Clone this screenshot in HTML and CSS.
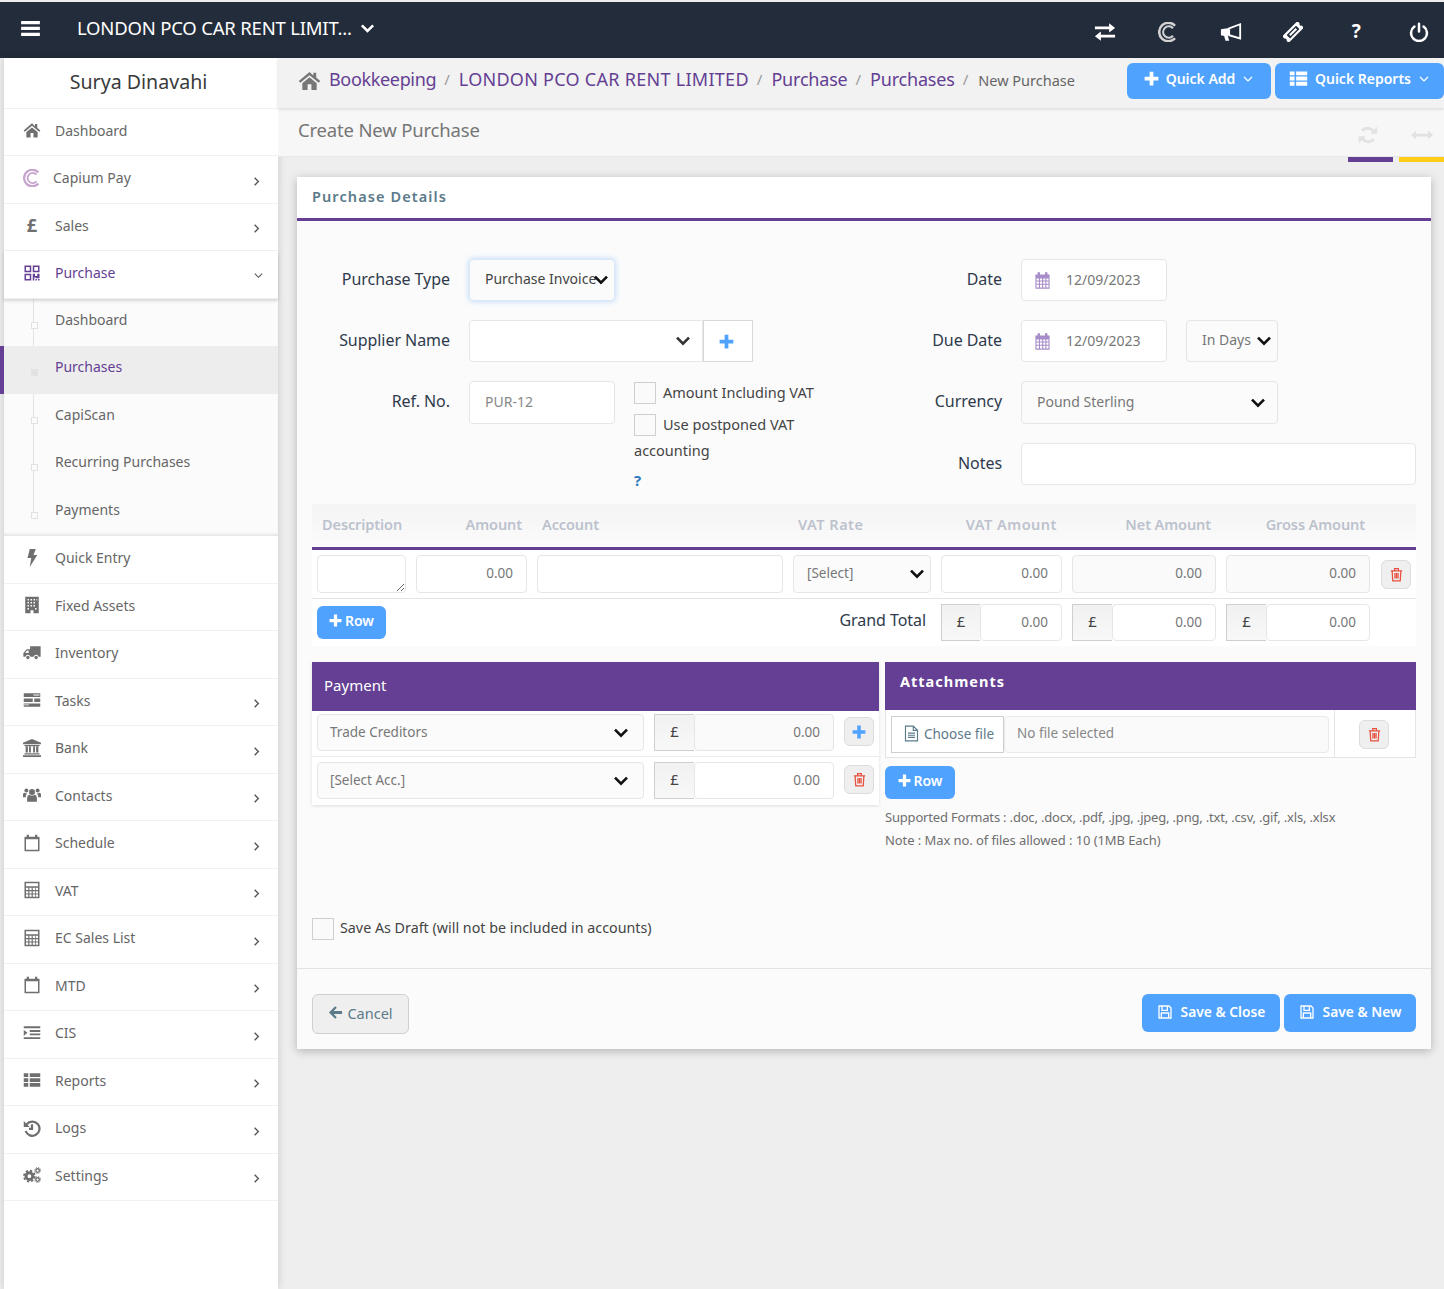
FILE: index.html
```html
<!DOCTYPE html>
<html lang="en">
<head>
<meta charset="utf-8">
<title>Create New Purchase</title>
<link rel="stylesheet" href="styles.css">
</head>
<body>
<svg class="sprite" xmlns="http://www.w3.org/2000/svg">
  <symbol id="i-home" viewBox="0 0 24 24"><path d="M12 3 .8 12.5l1.600 1.900L12 6.400l9.600 8 1.600-1.900-4.200-3.600V4h-3v2.900z"/><path d="M4.500 14.800V22H10v-6h4v6h5.500v-7.200L12 8.600z"/></symbol>
  <symbol id="i-exchange" viewBox="0 0 24 24"><path d="M1 6h15.500V2.500L23 7.500l-6.500 5V9H1zM23 15H7.500v-3.500L1 16.500l6.500 5V18H23z"/></symbol>
  <symbol id="i-capium" viewBox="0 0 24 24"><g fill="none" stroke="currentColor"><path stroke-width="3" d="M20.500 4.500a11 11 0 1 0 0 15"/><path stroke-width="2.400" d="M18 7.500a6.800 6.800 0 1 0 0 9"/></g></symbol>
  <symbol id="i-bullhorn" viewBox="0 0 24 24"><path d="M1 9 10 7.500v8l-1.500.3 1.500 5.700H6l-1.500-5.200L1 15.500z"/><path fill="none" stroke="currentColor" stroke-width="2" d="M10 8 22 3.500v15.500l-12-3.500z"/></symbol>
  <symbol id="i-ticket" viewBox="0 0 24 24"><g transform="rotate(-45 12 12)"><path fill-rule="evenodd" d="M-1 6.500h26v3.700a2 2 0 0 0 0 3.800v3.500H-1V14a2 2 0 0 0 0-3.800zM4 9.200v5.800h16V9.200z"/><path d="M6.500 10.800h11v2.600h-11z"/></g></symbol>
  <symbol id="i-power" viewBox="0 0 24 24"><path fill="none" stroke="currentColor" stroke-width="3" stroke-linecap="round" d="M6.500 5.500a9.500 9.500 0 1 0 11 0M12 2v9.500"/></symbol>
  <symbol id="i-plus" viewBox="0 0 24 24"><path d="M9 1h6v8h8v6h-8v8H9v-8H1V9h8z"/></symbol>
  <symbol id="i-list" viewBox="0 0 24 24"><path d="M1 3h6v5H1zM9 3h14v5H9zM1 9.500h6v5H1zM9 9.500h14v5H9zM1 16h6v5H1zM9 16h14v5H9z"/></symbol>
  <symbol id="i-refresh" viewBox="0 0 24 24"><path fill="none" stroke="currentColor" stroke-width="3.400" d="M19.500 9.500A8.500 8.500 0 0 0 5 7M4.500 14.500A8.500 8.500 0 0 0 19 17"/><path d="M23 2v8.500h-8.500zM1 22v-8.500h8.500z"/></symbol>
  <symbol id="i-arrows" viewBox="0 0 24 24"><path d="M0 12l5.500-5v3.500h13V7l5.500 5-5.500 5v-3.500h-13V17z"/></symbol>
  <symbol id="i-chev" viewBox="0 0 24 24"><path fill="none" stroke="currentColor" stroke-width="4" d="M3 7l9 9 9-9"/></symbol>
  <symbol id="i-chev-thin" viewBox="0 0 24 24"><path fill="none" stroke="currentColor" stroke-width="2.400" d="M4 8l8 8 8-8"/></symbol>
  <symbol id="i-chev-r" viewBox="0 0 24 24"><path fill="none" stroke="currentColor" stroke-width="3" d="M8 4l8 8-8 8"/></symbol>
  <symbol id="i-qr" viewBox="0 0 24 24"><path fill-rule="evenodd" d="M2 2h9v9H2zM4 4v5h5V4zM13 2h9v9h-9zM15 4v5h5V4zM2 13h9v9H2zM4 15v5h5v-5zM13 13h3v3h3v-3h3v6h-5v-1h-2v4h-2zM20 20h2v2h-2zM16.500 20h2v2h-2z"/></symbol>
  <symbol id="i-bolt" viewBox="0 0 24 24"><path d="M9 0h8l-3 8h5L9 24l2-12H6z"/></symbol>
  <symbol id="i-building" viewBox="0 0 24 24"><path fill-rule="evenodd" d="M3 1h18v22h-7v-4h-4v4H3zM6 4v2h2V4zM10 4v2h2V4zM14 4v2h2V4zM18 4v2h1V4zM6 8v2h2V8zM10 8v2h2V8zM14 8v2h2V8zM6 12v2h2v-2zM10 12v2h2v-2zM14 12v2h2v-2zM6 16v2h2v-2zM16 16v2h2v-2z"/></symbol>
  <symbol id="i-truck" viewBox="0 0 24 24"><path fill-rule="evenodd" d="M23.500 3v14h-2.700a3.300 3.300 0 0 0-6.500 0h-4.600a3.300 3.300 0 0 0-6.500 0H.500v-5L5 7h4.500V3zM2.800 12h4.700V8.800H5.600z"/><circle cx="6.500" cy="18" r="2.200"/><circle cx="17.500" cy="18" r="2.200"/></symbol>
  <symbol id="i-tasks" viewBox="0 0 24 24"><path d="M1 3h22v5H1zM1 10h12v4.500H1zM15 10h8v4.500h-8zM1 16.500h22V21H1z"/><path fill="#fff" d="M14 4.500h8v1.500h-8zM1 18h7v1H1z"/></symbol>
  <symbol id="i-bank" viewBox="0 0 24 24"><path d="M12 0 0 5v2h24V5zM2 8h20v1.500H2zM3.500 10h3v8h-3zM8 10h2.500v8H8zM13.500 10H16v8h-2.500zM17.500 10h3v8h-3zM2 19h20v1.500H2zM0 21.500h24V24H0z"/></symbol>
  <symbol id="i-users" viewBox="0 0 24 24"><circle cx="12" cy="8" r="4"/><circle cx="4.500" cy="6" r="2.600"/><circle cx="19.500" cy="6" r="2.600"/><path d="M5.500 21v-5c0-3 2-4.500 3-4.500 2 1.500 5 1.500 7 0 1 0 3 1.500 3 4.500v5zM0 15v-3c0-2 1-3 2-3 1 1 3 1 4 .8-1.500 1-2.300 2.500-2.200 5.200zM24 15v-3c0-2-1-3-2-3-1 1-3 1-4 .8 1.500 1 2.300 2.500 2.200 5.200z"/></symbol>
  <symbol id="i-cal" viewBox="0 0 24 24"><path fill-rule="evenodd" d="M2 3.500h3V1h3v2.500h8V1h3v2.500h3V23H2zM4 7v14h16V7z"/></symbol>
  <symbol id="i-calgrid" viewBox="0 0 24 24"><path fill-rule="evenodd" d="M2 3.500h3V.5h3.500v3h7v-3H19v3h3V23.500H2zM3.500 9v3h3.500V9zM8.500 9v3h3V9zM13 9v3h3V9zM17.500 9v3H20.500V9zM3.500 13.500v3h3.500v-3zM8.500 13.500v3h3v-3zM13 13.500v3h3v-3zM17.500 13.500v3h3v-3zM3.500 18v4h3.500v-4zM8.500 18v4h3v-4zM13 18v4h3v-4zM17.500 18v4h3v-4z"/></symbol>
  <symbol id="i-grid" viewBox="0 0 24 24"><path fill-rule="evenodd" d="M2 1h20v22H2zM4 3v4h16V3zM4 9v3h3V9zM8.500 9v3h3V9zM13 9v3h3V9zM17 9v3h3V9zM4 13.500v3h3v-3zM8.500 13.500v3h3v-3zM13 13.500v3h3v-3zM17 13.500v3h3v-3zM4 18v3h3v-3zM8.500 18v3h3v-3zM13 18v3h3v-3zM17 18v3h3v-3z"/></symbol>
  <symbol id="i-indent" viewBox="0 0 24 24"><path d="M1 3h22v2.500H1zM9 8h14v2.500H9zM9 12.500h14V15H9zM1 17.500h22V20H1zM1 8l5 3.800-5 3.700z"/></symbol>
  <symbol id="i-history" viewBox="0 0 24 24"><path fill="none" stroke="currentColor" stroke-width="3" d="M5 7a9.500 9.500 0 1 1-1.500 9M12 7v6H8"/><path d="M1 2.500l8 8H1z"/></symbol>
  <symbol id="i-cogs" viewBox="0 0 24 24"><g fill="none" stroke="currentColor"><circle cx="8.500" cy="13.500" r="4.500" stroke-width="4"/><circle cx="8.500" cy="13.500" r="7.200" stroke-width="2.400" stroke-dasharray="3 2.650"/><circle cx="19.500" cy="6" r="2.400" stroke-width="1.800"/><circle cx="19.500" cy="6" r="4" stroke-width="1.200" stroke-dasharray="1.600 1.540"/><circle cx="19.500" cy="18" r="2.400" stroke-width="1.800"/><circle cx="19.500" cy="18" r="4" stroke-width="1.200" stroke-dasharray="1.600 1.540"/></g></symbol>
  <symbol id="i-trash" viewBox="0 0 24 24"><path fill="none" stroke="currentColor" stroke-width="2" d="M3 6h18M9 6V2.500h6V6M5 6l1 16h12l1-16M9.500 9.500v9M12 9.500v9M14.500 9.500v9"/></symbol>
  <symbol id="i-file" viewBox="0 0 24 24"><path fill="none" stroke="currentColor" stroke-width="1.600" d="M3.500 1.500h11l6 6v15h-17zM14.500 1.500v6h6M7 11.500h10M7 14.500h10M7 17.500h10"/></symbol>
  <symbol id="i-save" viewBox="0 0 24 24"><path fill="none" stroke="currentColor" stroke-width="2" d="M3 3h15l3 3v15H3zM7.500 3v6.500h8V3M6.500 21v-7.500h11V21"/></symbol>
  <symbol id="i-back" viewBox="0 0 24 24"><path d="M11.500 2 1.500 12l10 10 2.500-2.500-5-5h13.500v-5H9l5-5z"/></symbol>
</svg>

<header class="topbar">
  <div class="top-left">
    <svg class="top-bars" viewBox="0 0 20 16"><path d="M0 0h20v3.500H0zM0 6.200h20v3.500H0zM0 12.500h20V16H0z"/></svg>
    <span class="company">LONDON PCO CAR RENT LIMIT...</span>
    <svg class="ic-15"><use href="#i-chev"/></svg>
  </div>
  <nav class="top-icons">
    <svg class="ic-22"><use href="#i-exchange"/></svg>
    <svg class="ic-20 muted-ic"><use href="#i-capium"/></svg>
    <svg class="ic-22"><use href="#i-bullhorn"/></svg>
    <svg class="ic-20"><use href="#i-ticket"/></svg>
    <span class="top-q">?</span>
    <svg class="ic-20"><use href="#i-power"/></svg>
  </nav>
</header>

<div class="shell">
  <aside class="sidebar">
    <div class="profile">Surya Dinavahi</div>
    <ul class="nav">
      <li class="nav-item"><svg class="nav-ic"><use href="#i-home"/></svg><span>Dashboard</span></li>
      <li class="nav-item tight"><svg class="nav-ic capium"><use href="#i-capium"/></svg><span>Capium Pay</span><svg class="nav-arrow"><use href="#i-chev-r"/></svg></li>
      <li class="nav-item"><span class="nav-ic pound">£</span><span>Sales</span><svg class="nav-arrow"><use href="#i-chev-r"/></svg></li>
      <li class="nav-item open"><svg class="nav-ic qr"><use href="#i-qr"/></svg><span>Purchase</span><svg class="nav-arrow down"><use href="#i-chev-thin"/></svg></li>
      <li class="subnav">
        <ul>
          <li class="sub-item">Dashboard</li>
          <li class="sub-item active">Purchases</li>
          <li class="sub-item">CapiScan</li>
          <li class="sub-item">Recurring Purchases</li>
          <li class="sub-item">Payments</li>
        </ul>
      </li>
      <li class="nav-item"><svg class="nav-ic"><use href="#i-bolt"/></svg><span>Quick Entry</span></li>
      <li class="nav-item"><svg class="nav-ic"><use href="#i-building"/></svg><span>Fixed Assets</span></li>
      <li class="nav-item"><svg class="nav-ic"><use href="#i-truck"/></svg><span>Inventory</span></li>
      <li class="nav-item"><svg class="nav-ic"><use href="#i-tasks"/></svg><span>Tasks</span><svg class="nav-arrow"><use href="#i-chev-r"/></svg></li>
      <li class="nav-item"><svg class="nav-ic"><use href="#i-bank"/></svg><span>Bank</span><svg class="nav-arrow"><use href="#i-chev-r"/></svg></li>
      <li class="nav-item"><svg class="nav-ic"><use href="#i-users"/></svg><span>Contacts</span><svg class="nav-arrow"><use href="#i-chev-r"/></svg></li>
      <li class="nav-item"><svg class="nav-ic"><use href="#i-cal"/></svg><span>Schedule</span><svg class="nav-arrow"><use href="#i-chev-r"/></svg></li>
      <li class="nav-item"><svg class="nav-ic"><use href="#i-grid"/></svg><span>VAT</span><svg class="nav-arrow"><use href="#i-chev-r"/></svg></li>
      <li class="nav-item"><svg class="nav-ic"><use href="#i-grid"/></svg><span>EC Sales List</span><svg class="nav-arrow"><use href="#i-chev-r"/></svg></li>
      <li class="nav-item"><svg class="nav-ic"><use href="#i-cal"/></svg><span>MTD</span><svg class="nav-arrow"><use href="#i-chev-r"/></svg></li>
      <li class="nav-item"><svg class="nav-ic"><use href="#i-indent"/></svg><span>CIS</span><svg class="nav-arrow"><use href="#i-chev-r"/></svg></li>
      <li class="nav-item"><svg class="nav-ic"><use href="#i-list"/></svg><span>Reports</span><svg class="nav-arrow"><use href="#i-chev-r"/></svg></li>
      <li class="nav-item"><svg class="nav-ic"><use href="#i-history"/></svg><span>Logs</span><svg class="nav-arrow"><use href="#i-chev-r"/></svg></li>
      <li class="nav-item"><svg class="nav-ic"><use href="#i-cogs"/></svg><span>Settings</span><svg class="nav-arrow"><use href="#i-chev-r"/></svg></li>
    </ul>
  </aside>

  <main class="main">
    <div class="crumbbar">
      <div class="crumbs">
        <svg class="crumb-home"><use href="#i-home"/></svg>
        <a class="crumb book">Bookkeeping</a><span class="sep">/</span>
        <a class="crumb caps">LONDON PCO CAR RENT LIMITED</a><span class="sep">/</span>
        <a class="crumb">Purchase</a><span class="sep">/</span>
        <a class="crumb">Purchases</a><span class="sep">/</span>
        <span class="crumb-current">New Purchase</span>
      </div>
      <div class="quick">
        <button class="btn-quick add"><svg class="ic-15"><use href="#i-plus"/></svg>Quick Add<svg class="ic-12"><use href="#i-chev-thin"/></svg></button>
        <button class="btn-quick reports"><svg class="ic-19"><use href="#i-list"/></svg>Quick Reports<svg class="ic-12"><use href="#i-chev-thin"/></svg></button>
      </div>
    </div>
    <div class="titlebar">
      <h1>Create New Purchase</h1>
      <div class="title-tools">
        <svg class="ic-20"><use href="#i-refresh"/></svg>
        <svg class="ic-22"><use href="#i-arrows"/></svg>
      </div>
    </div>
    <div class="strips"><i class="strip purple"></i><i class="strip yellow"></i></div>

    <section class="panel">
      <h2 class="panel-head">Purchase Details</h2>
      <div class="panel-body">
        <div class="topform">
          <div class="col-left">
            <div class="row">
              <label class="lbl">Purchase Type</label>
              <div class="sel w146 focus"><select class="ctl dark"><option>Purchase Invoice</option></select><svg class="sel-ic"><use href="#i-chev"/></svg></div>
            </div>
            <div class="row">
              <label class="lbl">Supplier Name</label>
              <div class="sel w234"><select class="ctl square-r"><option></option></select><svg class="sel-ic far thin-ic"><use href="#i-chev"/></svg></div>
              <button class="btn-add"><svg class="ic-15 blue"><use href="#i-plus"/></svg></button>
            </div>
            <div class="row ref">
              <label class="lbl">Ref. No.</label>
              <input class="ctl w146 tall" placeholder="PUR-12">
              <div class="checks">
                <label class="check-line"><input type="checkbox" class="cb">Amount Including VAT</label>
                <label class="check-line second"><input type="checkbox" class="cb">Use postponed VAT</label>
                <div class="check-wrap">accounting</div>
                <div class="help">?</div>
              </div>
            </div>
          </div>
          <div class="col-right">
            <div class="row">
              <label class="lbl short">Date</label>
              <div class="date"><svg class="cal-ic"><use href="#i-calgrid"/></svg><span>12/09/2023</span></div>
            </div>
            <div class="row">
              <label class="lbl short">Due Date</label>
              <div class="date"><svg class="cal-ic"><use href="#i-calgrid"/></svg><span>12/09/2023</span></div>
              <div class="sel days"><select class="ctl"><option>In Days</option></select><svg class="sel-ic"><use href="#i-chev"/></svg></div>
            </div>
            <div class="row">
              <label class="lbl short">Currency</label>
              <div class="sel w257"><select class="ctl tall"><option>Pound Sterling</option></select><svg class="sel-ic far"><use href="#i-chev"/></svg></div>
            </div>
            <div class="row">
              <label class="lbl short">Notes</label>
              <input class="ctl w395">
            </div>
          </div>
        </div>

        <div class="lines">
          <div class="line-head">
            <span>Description</span><span class="r">Amount</span><span>Account</span><span class="wide">VAT Rate</span><span class="r wide">VAT Amount</span><span class="r">Net Amount</span><span class="r">Gross Amount</span><span></span>
          </div>
          <div class="line-row">
            <textarea class="ctl area"></textarea>
            <input class="ctl num h38" value="0.00">
            <input class="ctl h38">
            <div class="sel"><select class="ctl h38 small"><option>[Select]</option></select><svg class="sel-ic"><use href="#i-chev"/></svg></div>
            <input class="ctl num h38" value="0.00">
            <input class="ctl num h38 ro" value="0.00" readonly>
            <input class="ctl num h38 ro" value="0.00" readonly>
            <button class="btn-icon"><svg class="ic-15 red"><use href="#i-trash"/></svg></button>
          </div>
          <div class="line-total">
            <div class="total-left">
              <button class="btn-row"><svg class="ic-13"><use href="#i-plus"/></svg>Row</button>
              <span class="grand">Grand Total</span>
            </div>
            <div class="money"><span class="addon">£</span><input class="ctl num h37" value="0.00"></div>
            <div class="money"><span class="addon">£</span><input class="ctl num h37" value="0.00"></div>
            <div class="money"><span class="addon">£</span><input class="ctl num h37" value="0.00"></div>
          </div>
        </div>

        <div class="blocks">
          <div class="payment">
            <div class="pay-head">Payment</div>
            <div class="pay-row first">
              <div class="sel"><select class="ctl h37 small pay-sel"><option>Trade Creditors</option></select><svg class="sel-ic pay-ic"><use href="#i-chev"/></svg></div>
              <div class="money"><span class="addon">£</span><input class="ctl num h37 ro" value="0.00" readonly></div>
              <button class="btn-icon"><svg class="ic-14 blue"><use href="#i-plus"/></svg></button>
            </div>
            <div class="pay-row">
              <div class="sel"><select class="ctl h37 small pay-sel"><option>[Select Acc.]</option></select><svg class="sel-ic pay-ic"><use href="#i-chev"/></svg></div>
              <div class="money"><span class="addon">£</span><input class="ctl num h37" value="0.00"></div>
              <button class="btn-icon"><svg class="ic-15 red"><use href="#i-trash"/></svg></button>
            </div>
          </div>
          <div class="attach">
            <div class="att-head">Attachments</div>
            <div class="att-row">
              <div class="att-file">
                <button class="btn-file"><svg class="ic-17"><use href="#i-file"/></svg>Choose file</button>
                <span class="no-file">No file selected</span>
              </div>
              <div class="att-del"><button class="btn-icon"><svg class="ic-15 red"><use href="#i-trash"/></svg></button></div>
            </div>
            <button class="btn-row att-add"><svg class="ic-13"><use href="#i-plus"/></svg>Row</button>
            <p class="att-note">Supported Formats : .doc, .docx, .pdf, .jpg, .jpeg, .png, .txt, .csv, .gif, .xls, .xlsx</p>
            <p class="att-note limit">Note : Max no. of files allowed : 10 (1MB Each)</p>
          </div>
        </div>

        <label class="draft"><input type="checkbox" class="cb">Save As Draft (will not be included in accounts)</label>
      </div>
      <footer class="panel-foot">
        <button class="btn-cancel"><svg class="ic-15"><use href="#i-back"/></svg>Cancel</button>
        <div class="foot-right">
          <button class="btn-save close"><svg class="ic-16"><use href="#i-save"/></svg>Save &amp; Close</button>
          <button class="btn-save new"><svg class="ic-16"><use href="#i-save"/></svg>Save &amp; New</button>
        </div>
      </footer>
    </section>
  </main>
</div>
</body>
</html>
```

FILE: styles.css
```css
* { box-sizing: border-box; }
html, body { margin: 0; height: 100%; }
body {
  padding-top: 2px;
  background: #eeeeee;
  font-family: "Noto Sans", "Open Sans", sans-serif;
  color: #555;
  overflow: hidden;
}
ul { list-style: none; margin: 0; padding: 0; }
p, h1, h2 { margin: 0; font-weight: 400; }
button { font-family: inherit; cursor: pointer; }
svg { fill: currentColor; flex: none; }
.sprite { display: none; }

.ic-12 { width: 12px; height: 12px; }
.ic-13 { width: 13px; height: 13px; }
.ic-14 { width: 14px; height: 14px; }
.ic-15 { width: 15px; height: 15px; }
.ic-16 { width: 16px; height: 16px; }
.ic-17 { width: 17px; height: 17px; }
.ic-19 { width: 19px; height: 19px; }
.ic-20 { width: 20px; height: 20px; }
.ic-22 { width: 22px; height: 22px; }
.blue { color: #4fa3ff; }
.red { color: #e8503f; }

/* top bar */
.topbar {
  height: 56px;
  background: #232c3b;
  color: #fff;
  display: flex;
  align-items: center;
  justify-content: space-between;
}
.top-left { display: flex; align-items: center; padding: 0 0 3px 21px; }
.top-bars { width: 19px; height: 15px; }
.company { margin: -3px 8px 0 37px; font-size: 18.500px; letter-spacing: -.2px; }
.top-icons {
  display: flex;
  align-items: center;
  justify-content: space-between;
  width: 335px;
  margin-right: 15px;
  padding-top: 3px;
}
.top-q { width: 22px; text-align: center; font-size: 19px; font-weight: 700; margin-top: -2px; }
.muted-ic { color: #d2d2d2; }

.shell { display: flex; min-height: calc(100vh - 58px); }

/* sidebar */
.sidebar {
  width: 274px;
  margin-left: 4px;
  background: #fff;
  box-shadow: 0 0 8px rgba(0,0,0,.16);
  flex: none;
}
.profile {
  height: 50.500px;
  border-bottom: 1px solid #f1f1f1;
  padding-right: 5px;
  font-size: 19.600px;
  color: #3a3a3a;
  text-align: center;
  line-height: 47px;
}
.nav-item {
  position: relative;
  display: flex;
  align-items: center;
  height: 47.500px;
  padding: 0 0 3px 19px;
  border-bottom: 1px solid #f1f1f1;
  font-size: 14px;
  color: #666;
}
.nav-ic { width: 18px; height: 18px; margin-right: 14px; color: #6f6f6f; }
.nav-item.tight .nav-ic { margin-right: 12px; }
.nav-ic.capium { color: #c7a4cf; }
.nav-ic.pound { font-size: 18px; font-weight: 700; text-align: center; line-height: 18px; }
.nav-ic.qr { color: #643f93; }
.nav-item.open { color: #643f93; box-shadow: 0 2px 3px rgba(0,0,0,.15); z-index: 1; }
.nav-arrow { width: 11px; height: 11px; margin-left: auto; margin-right: 16px; margin-top: 7px; color: #555; }
.nav-arrow.down { margin-right: 14px; margin-top: 5px; }

.subnav { background: #fbfbfb; box-shadow: inset 0 -3px 3px -1px rgba(0,0,0,.09); }
.subnav ul { position: relative; }
.subnav ul::before {
  content: "";
  position: absolute;
  left: 29px;
  top: 0;
  bottom: 22px;
  width: 1px;
  background: #e4e4e4;
}
.sub-item {
  position: relative;
  height: 47.500px;
  padding: 9px 0 0 51px;
  font-size: 14px;
  line-height: 24px;
  color: #666;
}
.sub-item::before {
  content: "";
  position: absolute;
  left: 27px;
  top: 23px;
  width: 5px;
  height: 5px;
  background: #fbfbfb;
  border: 1px solid #e2e2e2;
}
.sub-item.active { background: #ededed; color: #643f93; box-shadow: -4px 0 0 #643f93; }
.sub-item.active::before { background: #e2e2e2; }

/* main */
.main { flex: 1; min-width: 0; }
.crumbbar {
  height: 50px;
  background: #f2f2f2;
  box-shadow: 0 1px 3px rgba(0,0,0,.14);
  display: flex;
  justify-content: space-between;
  padding: 5px 0 0 20px;
  position: relative;
}
.crumbs { display: flex; align-items: center; height: 32px; }
.crumb-home { width: 23px; height: 23px; color: #777; margin-right: 8px; margin-top: 2px; }
.crumb { font-size: 18px; color: #643f93; letter-spacing: -.2px; }
.crumb.book { letter-spacing: -.34px; }
.crumb.caps { letter-spacing: .28px; }
.sep { margin: 0 9px 0 8px; color: #999; font-size: 15px; }
.crumb-current { font-size: 14.500px; color: #666; margin-left: 1px; margin-top: 2px; }
.quick { display: flex; gap: 4px; }
.btn-quick {
  height: 36px;
  border: 0;
  border-radius: 6px;
  background: #4fa3ff;
  color: #fff;
  font-size: 14px;
  font-weight: 600;
  display: flex;
  align-items: center;
  justify-content: center;
  gap: 7px;
  padding: 0 0 5px;
}
.btn-quick.add { width: 144px; }
.btn-quick.reports { width: 169px; }

.titlebar {
  height: 49px;
  background: #f7f7f7;
  border-bottom: 1px solid #e8e8e8;
  display: flex;
  align-items: center;
  justify-content: space-between;
  padding: 0 11px 5px 20px;
}
.titlebar h1 { font-size: 18.500px; color: #767676; letter-spacing: -.18px; }
.title-tools { display: flex; align-items: center; gap: 33px; color: #e2e2e2; padding-top: 10px; }

.strips { display: flex; justify-content: flex-end; gap: 6px; height: 5px; }
.strip { width: 45px; height: 5px; }
.strip.purple { background: #643f93; }
.strip.yellow { background: #ffcc17; }

/* panel */
.panel {
  width: 1134px;
  margin: 15px 0 0 19px;
  background: #fbfbfb;
  box-shadow: 0 2px 9px rgba(0,0,0,.25);
}
.panel-head {
  height: 44px;
  background: #fff;
  border-bottom: 3px solid #643f93;
  padding: 9px 15px 0;
  font-size: 14.500px;
  font-weight: 600;
  letter-spacing: 1.100px;
  color: #5b7a8a;
}
.panel-body { padding: 38px 15px 0; border-bottom: 1px solid #e3e3e3; height: 748px; }

/* form controls */
.ctl {
  display: block;
  height: 42px;
  width: 100%;
  border: 1px solid #e6e6e6;
  border-radius: 4px;
  background: #fff;
  padding: 0 15px 3px;
  font-family: inherit;
  font-size: 14px;
  color: #777;
  outline: 0;
  appearance: none;
}
.ctl::placeholder { color: #888; opacity: 1; }
.ctl.tall { height: 43px; }
.ctl.dark { color: #444; background: #fbfbfb; }
.ctl.square-r { border-radius: 4px 0 0 4px; }
.h38 { height: 38px; }
.h37 { height: 37px; }
.small { padding: 0 13px 2px; font-size: 13.500px; }
.num { text-align: right; padding: 0 13px 2px; font-size: 13.500px; }
.ro { background: #fafafa; }
.area { height: 38px; padding: 4px; resize: both; appearance: auto; }
.w146 { width: 146px; }
.w234 { width: 234px; }
.w257 { width: 257px; }
.w395 { width: 395px; }
.sel { position: relative; }
.sel select { background-color: #fbfbfb; }
.sel-ic {
  position: absolute;
  right: 6px;
  top: 50%;
  width: 16px;
  height: 16px;
  margin-top: -8px;
  color: #111;
  pointer-events: none;
}
.sel-ic.far { right: 12px; }
.sel-ic.thin-ic { color: #333; }
.sel-ic.pay-ic { right: 15px; }
.sel .pay-sel { padding-left: 12px; }
.focus select { border-color: #dbe9f7; box-shadow: 0 0 6px rgba(79,163,255,.4); }
.w234 select { background: #fff; }

.topform { display: flex; gap: 6px; }
.col-left { width: 567px; }
.col-right { flex: 1; }
.row { display: flex; align-items: flex-start; margin-bottom: 19px; }
.lbl {
  width: 138px;
  margin-right: 19px;
  text-align: right;
  font-size: 16px;
  color: #2e3a4b;
  line-height: 41px;
  flex: none;
  letter-spacing: -.05px;
}
.lbl.short { width: 117px; }
.btn-add {
  width: 50px;
  height: 42px;
  border: 1px solid #d8d8d8;
  background: #fff;
  padding: 0 4px 0 0;
  display: flex;
  align-items: center;
  justify-content: center;
}
.ref { margin-bottom: 0; }
.checks { margin-left: 19px; font-size: 14.500px; color: #444; }
.check-line { display: flex; align-items: flex-start; gap: 7px; height: 22px; margin-top: 1px; white-space: nowrap; line-height: 20px; }
.check-line.second { margin-top: 10px; }
.cb {
  appearance: none;
  margin: 0;
  width: 22px;
  height: 22px;
  border: 1px solid #cfcfcf;
  background: #fafafa;
  flex: none;
}
.check-wrap { margin-top: 2px; line-height: 24px; }
.help { margin-top: 6px; font-size: 15px; font-weight: 700; color: #2f79bd; line-height: 24px; }

.date {
  width: 146px;
  height: 42px;
  background: #fff;
  border: 1px solid #e6e6e6;
  border-radius: 4px;
  display: flex;
  align-items: center;
  padding: 0 0 2px 12px;
  gap: 15px;
  font-size: 14px;
  color: #777;
}
.cal-ic { width: 17px; height: 17px; color: #a68cc8; margin-top: 2px; }
.sel.days { width: 92px; margin-left: 19px; }
.sel.days select { padding-left: 15px; }

/* lines table */
.lines { background: #fff; }
.line-head, .line-row {
  display: grid;
  grid-template-columns: 89px 111px 246px 138px 121px 144px 144px 30px;
  column-gap: 10px;
  padding-left: 5px;
}
.line-head {
  height: 46px;
  align-items: center;
  background: linear-gradient(#f4f4f4, #fbfbfb);
  border-bottom: 3px solid #643f93;
  font-size: 14.500px;
  font-weight: 600;
  color: #bcc2cd;
  padding-bottom: 3px;
  letter-spacing: -.1px;
}
.line-head span { padding: 0 5px; white-space: nowrap; }
.line-head .r { text-align: right; }
.line-head .wide { letter-spacing: .5px; }
.line-row {
  height: 49px;
  padding-top: 5px;
  border-bottom: 1px solid #e4e4e4;
  align-items: start;
}
.btn-icon {
  width: 30px;
  height: 29px;
  padding: 0;
  border: 1px solid #dcdcdc;
  border-radius: 6px;
  background: #efefef;
  display: flex;
  align-items: center;
  justify-content: center;
}
.line-row .btn-icon { margin: 5px 0 0 1px; }
.line-total {
  height: 47px;
  padding: 5px 0 0 5px;
  display: grid;
  grid-template-columns: 614px 121px 144px 144px;
  column-gap: 10px;
  align-items: start;
}
.total-left { display: flex; justify-content: space-between; align-items: center; height: 36px; }
.grand { font-size: 16px; color: #2e3a4b; margin-right: 5px; letter-spacing: -.05px; padding-bottom: 5px; }
.btn-row {
  width: 69px;
  height: 33px;
  border: 0;
  border-radius: 6px;
  background: #4fa3ff;
  color: #fff;
  font-size: 14px;
  font-weight: 600;
  display: flex;
  align-items: center;
  justify-content: center;
  gap: 3px;
  padding: 0 0 4px;
}
.money { display: flex; }
.addon {
  flex: none;
  width: 40px;
  height: 37px;
  background: linear-gradient(#f1f1f1, #f8f8f8);
  border: 1px solid #cfcfcf;
  border-right: 0;
  text-align: center;
  line-height: 32px;
  font-size: 15px;
  color: #444;
}
.line-total .money:nth-child(2) .addon { width: 39px; }
.money .ctl { min-width: 0; flex: 1; }

/* blocks */
.blocks { display: flex; gap: 6px; margin-top: 16px; align-items: flex-start; }
.payment { width: 567px; background: #fff; box-shadow: 0 1px 3px rgba(0,0,0,.12); }
.pay-head {
  height: 49px;
  background: #643f93;
  color: #fff;
  font-size: 15px;
  padding: 0 12px;
  line-height: 46px;
}
.pay-row {
  display: grid;
  grid-template-columns: 327px 180px 30px;
  column-gap: 10px;
  padding: 5px 5px 0;
  height: 48px;
  align-items: start;
}
.pay-row.first { height: 46px; padding-top: 3px; border-bottom: 1px solid #e8edf3; }
.pay-row .btn-icon { margin-top: 3px; }
.attach { flex: 1; }
.att-head {
  height: 48px;
  background: #643f93;
  color: #fff;
  font-size: 14.500px;
  font-weight: 700;
  letter-spacing: 1px;
  padding: 9px 15px 0;
}
.att-row { display: flex; height: 48px; background: #fff; border: 1px solid #e4e4e4; border-top: 0; }
.att-file { display: flex; width: 449px; padding: 6px 5px 0; border-right: 1px solid #e4e4e4; }
.btn-file {
  width: 113px;
  height: 37px;
  border: 1px solid #cfcfcf;
  background: #fff;
  color: #5b7a8a;
  font-size: 13.500px;
  display: flex;
  align-items: center;
  gap: 4px;
  padding: 0 0 2px 11px;
  flex: none;
}
.no-file {
  flex: 1;
  height: 37px;
  background: #fafafa;
  border: 1px solid #eaeaea;
  border-radius: 4px;
  padding: 0 12px;
  line-height: 32px;
  font-size: 13.500px;
  color: #888;
}
.att-del { flex: 1; display: flex; justify-content: center; padding: 10px 2px 0 0; }
.att-add { margin: 8px 0 7px; width: 70px; }
.att-note { font-size: 13px; line-height: 23px; color: #6f6f6f; letter-spacing: -.19px; white-space: nowrap; }
.att-note.limit { letter-spacing: -.08px; }

.draft {
  display: flex;
  align-items: flex-start;
  gap: 6px;
  margin-top: 66px;
  font-size: 14.300px;
  line-height: 20px;
  color: #444;
}

/* footer */
.panel-foot {
  height: 80px;
  padding: 25px 15px 0;
  display: flex;
  justify-content: space-between;
  align-items: flex-start;
}
.btn-cancel {
  width: 97px;
  height: 40px;
  background: #efefef;
  border: 1px solid #cfcfcf;
  border-radius: 6px;
  color: #5b7a8a;
  font-size: 14.500px;
  display: flex;
  align-items: center;
  justify-content: center;
  gap: 4px;
  padding: 0 0 3px;
}
.foot-right { display: flex; gap: 4px; }
.btn-save {
  height: 38px;
  border: 0;
  border-radius: 6px;
  background: #4fa3ff;
  color: #fff;
  font-size: 13.800px;
  font-weight: 600;
  display: flex;
  align-items: center;
  justify-content: center;
  gap: 8px;
  padding: 0 0 3px;
}
.btn-save.close { width: 138px; }
.btn-save.new { width: 132px; }
```
